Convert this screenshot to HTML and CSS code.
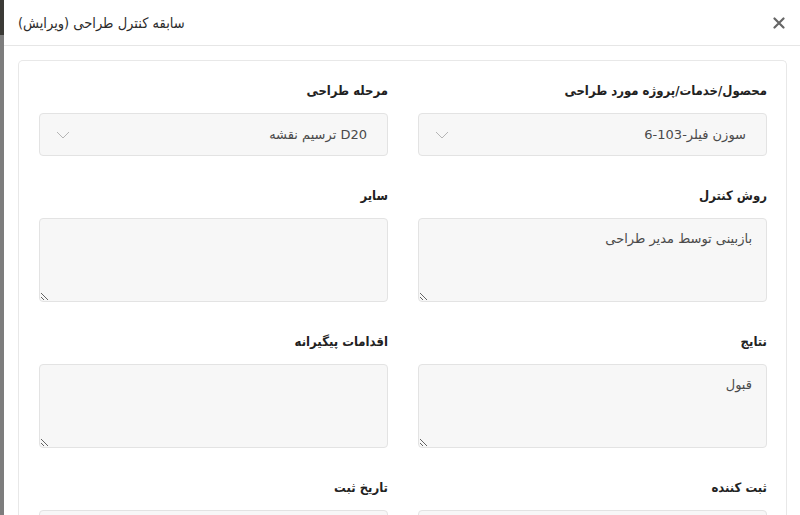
FILE: index.html
```html
<!DOCTYPE html>
<html lang="fa">
<head>
    <meta charset="UTF-8">
    <meta name="viewport" content="width=device-width, initial-scale=1.0">
    <title>سابقه کنترل طراحی</title>
    <link rel="stylesheet" href="styles.css">
</head>
<body>
    <div class="backdrop">
        <div class="backdrop-top"></div>
    </div>
    <div class="modal">
        <div class="modal-header">
            <h5 class="modal-title" dir="rtl">سابقه کنترل طراحی (ویرایش)</h5>
            <button class="close-btn" type="button">
                <svg width="12" height="12" viewBox="0 0 12 12">
                    <path d="M1.5 1.5 L10.5 10.5 M10.5 1.5 L1.5 10.5" stroke="#666" stroke-width="2.2" stroke-linecap="round"/>
                </svg>
            </button>
        </div>
        <div class="modal-body">
            <div class="card" dir="rtl">
                <div class="form-row">
                    <div class="form-group">
                        <label>محصول/خدمات/پروژه مورد طراحی</label>
                        <div class="select">
                            <span>سوزن فیلر-103-6</span>
                            <svg width="14" height="8" viewBox="0 0 14 8"><path d="M1 1 L7 7 L13 1" fill="none" stroke="#b5b5b5" stroke-width="1"/></svg>
                        </div>
                    </div>
                    <div class="form-group">
                        <label>مرحله طراحی</label>
                        <div class="select">
                            <span>D20 ترسیم نقشه</span>
                            <svg width="14" height="8" viewBox="0 0 14 8"><path d="M1 1 L7 7 L13 1" fill="none" stroke="#b5b5b5" stroke-width="1"/></svg>
                        </div>
                    </div>
                </div>
                <div class="form-row">
                    <div class="form-group">
                        <label>روش کنترل</label>
                        <textarea>بازبینی توسط مدیر طراحی</textarea>
                    </div>
                    <div class="form-group">
                        <label>سایر</label>
                        <textarea></textarea>
                    </div>
                </div>
                <div class="form-row">
                    <div class="form-group">
                        <label>نتایج</label>
                        <textarea>قبول</textarea>
                    </div>
                    <div class="form-group">
                        <label>اقدامات پیگیرانه</label>
                        <textarea></textarea>
                    </div>
                </div>
                <div class="form-row">
                    <div class="form-group">
                        <label>ثبت کننده</label>
                        <div class="select"></div>
                    </div>
                    <div class="form-group">
                        <label>تاریخ ثبت</label>
                        <div class="select"></div>
                    </div>
                </div>
            </div>
        </div>
    </div>
</body>
</html>
```

FILE: styles.css
```css
body {
    margin: 0;
    font-family: "DejaVu Sans", sans-serif;
    background: #fff;
    display: flex;
    height: 515px;
    overflow: hidden;
}
.backdrop {
    width: 4px;
    flex: none;
    background: #7d7d7d;
}
.backdrop-top {
    height: 35px;
    background: #3b3a36;
}
.modal {
    flex: 1;
    background: #fff;
    display: flex;
    flex-direction: column;
}
.modal-header {
    flex: none;
    display: flex;
    justify-content: space-between;
    align-items: center;
    height: 46px;
    box-sizing: border-box;
    padding: 0 13px 0 14px;
    border-bottom: 1px solid #e6e6e6;
}
.modal-title {
    margin: 0;
    font-family: "DejaVu Sans Condensed", "DejaVu Sans", sans-serif;
    font-size: 14.5px;
    font-weight: normal;
    color: #2b2b2b;
}
.close-btn {
    background: none;
    border: none;
    padding: 0;
    width: 14px;
    height: 14px;
    display: flex;
    align-items: center;
    justify-content: center;
    margin-right: 1px;
}
.modal-body {
    flex: none;
    padding: 14px 13px 0 14px;
}
.card {
    border: 1px solid #e8e8e8;
    border-bottom: none;
    border-radius: 5px 5px 0 0;
    padding: 19px 19px 0 20px;
}
.form-row {
    display: flex;
    gap: 30px;
}
.form-group {
    flex: 1;
    margin-bottom: 29px;
}
.form-group label {
    display: block;
    font-family: "DejaVu Sans Condensed", "DejaVu Sans", sans-serif;
    font-size: 13px;
    font-weight: bold;
    color: #222;
    line-height: 21px;
    margin-bottom: 12px;
}
.select {
    height: 43px;
    box-sizing: border-box;
    background: #f7f7f7;
    border: 1px solid #e3e3e3;
    border-radius: 4px;
    display: flex;
    align-items: center;
    justify-content: space-between;
    padding: 0 20px 0 16px;
    font-size: 13px;
    color: #4a4a4a;
}
textarea {
    display: block;
    width: 100%;
    height: 84px;
    box-sizing: border-box;
    background: #f7f7f7;
    border: 1px solid #e3e3e3;
    border-radius: 4px;
    padding: 12px 14px;
    font-family: "DejaVu Sans", sans-serif;
    font-size: 13px;
    color: #4a4a4a;
    direction: rtl;
}
```
